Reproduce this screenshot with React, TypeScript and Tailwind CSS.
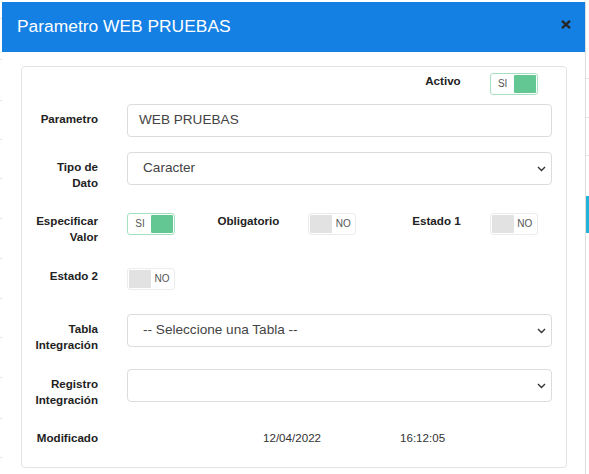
import React from "react";

function Toggle({ on }: { on: boolean }) {
  if (on) {
    return (
      <div className="w-[48px] h-[22px] border border-[#a6e0c1] rounded-[3px] p-px flex items-center shrink-0">
        <span className="flex-1 text-center text-[10px] text-[#555] leading-none">SI</span>
        <span className="w-[22px] h-[18px] bg-[#63c794] rounded-[1px]" />
      </div>
    );
  }
  return (
    <div className="w-[48px] h-[22px] border border-[#ececec] rounded-[3px] p-px flex items-center shrink-0">
      <span className="w-[22px] h-[18px] bg-[#e2e2e2] rounded-[1px]" />
      <span className="flex-1 text-center text-[10px] text-[#555] leading-none">NO</span>
    </div>
  );
}

function Label({ lines, pt = "" }: { lines: string[]; pt?: string }) {
  return (
    <div
      className={`w-[76px] shrink-0 flex flex-col items-end text-[11.6px] font-bold leading-[16px] text-[#222] ${pt}`}
    >
      {lines.map((l) => (
        <span key={l} className="whitespace-nowrap">
          {l}
        </span>
      ))}
    </div>
  );
}

function Chevron() {
  return (
    <svg width="9" height="6" viewBox="0 0 9 6" className="shrink-0">
      <path d="M1 1 L4.5 4.5 L8 1" fill="none" stroke="#333" strokeWidth="1.4" />
    </svg>
  );
}

function Select({ value }: { value: string }) {
  return (
    <div className="ml-[29px] w-[425px] h-[33px] border border-[#dcdcdc] rounded-[4px] flex items-center justify-between pl-[15px] pr-[5px] shrink-0">
      <span className="text-[13.6px] text-[#444]">{value}</span>
      <Chevron />
    </div>
  );
}

function ToggleCol({ lines, on }: { lines: string[]; on: boolean }) {
  return (
    <div className="w-[182px] flex items-start">
      <Label lines={lines} />
      <div className="ml-[29px]">
        <Toggle on={on} />
      </div>
    </div>
  );
}

export default function App() {
  const leftLines = [18, 59, 100, 139, 178, 218, 258, 298, 337, 377, 418, 457];
  return (
    <div className="relative w-[589px] h-[474px] bg-white overflow-hidden font-['Liberation_Sans',Arial,sans-serif]">
      {/* background page hints */}
      {leftLines.map((y) => (
        <div key={y} className="absolute left-0 w-[3px] h-px bg-[#e4e4e4]" style={{ top: y }} />
      ))}
      {[78, 117, 155].map((y) => (
        <div key={y} className="absolute left-[586px] w-[4px] h-px bg-[#e4e4e4]" style={{ top: y }} />
      ))}
      <div className="absolute left-[586px] top-[196px] w-[4px] h-[37px] bg-[#1fb4d8]" />

      {/* modal */}
      <div className="absolute left-[2px] top-[2px] w-[584px] h-[520px] bg-white border-r border-[#dedede]">
        <div className="h-[50px] bg-[#1580e4] flex justify-between pl-[15px] pr-[14px]">
          <span className="mt-[14px] text-white text-[17.4px] leading-[20px]">Parametro WEB PRUEBAS</span>
          <svg width="10" height="9" viewBox="0 0 10 9" className="mt-[18px]">
            <path d="M1 0.8 L9 8.2 M9 0.8 L1 8.2" stroke="#262626" strokeWidth="2.3" />
          </svg>
        </div>

        <div className="pt-[14px] pl-[19px]">
          <div className="w-[546px] h-[402px] border border-[#e3e3e3] rounded-[4px] pt-[6px]">
            {/* Activo */}
            <div className="flex h-[22px]">
              <div className="w-[364px]" />
              <ToggleCol lines={["Activo"]} on={true} />
            </div>

            {/* Parametro */}
            <div className="flex mt-[9px]">
              <Label lines={["Parametro"]} pt="pt-[7px]" />
              <div className="ml-[29px] w-[425px] h-[33px] border border-[#dcdcdc] rounded-[4px] flex items-center pl-[11px] shrink-0">
                <span className="text-[13.6px] text-[#444]">WEB PRUEBAS</span>
              </div>
            </div>

            {/* Tipo de Dato */}
            <div className="flex mt-[15px] h-[39px]">
              <Label lines={["Tipo de", "Dato"]} pt="pt-[7px]" />
              <Select value="Caracter" />
            </div>

            {/* toggles row 1 */}
            <div className="flex mt-[22px] h-[32px]">
              <ToggleCol lines={["Especificar", "Valor"]} on={true} />
              <ToggleCol lines={["Obligatorio"]} on={false} />
              <ToggleCol lines={["Estado 1"]} on={false} />
            </div>

            {/* toggles row 2 */}
            <div className="flex mt-[23px] h-[22px]">
              <ToggleCol lines={["Estado 2"]} on={false} />
            </div>

            {/* Tabla */}
            <div className="flex mt-[24px] h-[39px]">
              <Label lines={["Tabla", "Integración"]} pt="pt-[7px]" />
              <Select value="-- Seleccione una Tabla --" />
            </div>

            {/* Registro */}
            <div className="flex mt-[16px] h-[39px]">
              <Label lines={["Registro", "Integración"]} pt="pt-[7px]" />
              <Select value="" />
            </div>

            {/* Modificado */}
            <div className="flex mt-[22px] text-[11.6px] leading-[16px] text-[#333]">
              <Label lines={["Modificado"]} />
              <span className="ml-[165px] w-[137px]">12/04/2022</span>
              <span>16:12:05</span>
            </div>
          </div>
        </div>
      </div>
    </div>
  );
}
